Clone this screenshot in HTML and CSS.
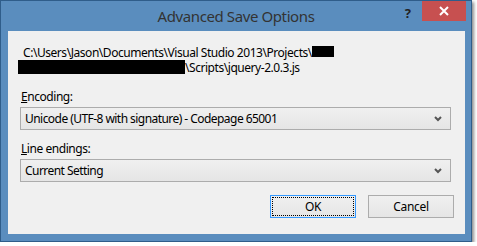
FILE: index.html
```html
<!DOCTYPE html>
<html lang="en">
<head>
    <meta charset="UTF-8">
    <title>Advanced Save Options</title>
    <link rel="stylesheet" href="styles.css">
</head>
<body>
    <div class="window">
        <div class="titlebar">
            <span class="title">Advanced Save Options</span>
            <span class="help">?</span>
            <span class="close">
                <svg width="10" height="10" viewBox="0 0 10 10">
                    <path d="M1 1 L9 9 M9 1 L1 9" stroke="#fff" stroke-width="2"/>
                </svg>
            </span>
        </div>

        <div class="client">
            <div class="path">
                <div class="path-line">C:\Users\Jason\Documents\Visual Studio 2013\Projects\<span class="redact short"></span></div>
                <div class="path-line second"><span class="redact long"></span>\Scripts\jquery-2.0.3.js</div>
            </div>

            <div class="field">
                <div class="label"><u>E</u>ncoding:</div>
                <div class="combo">
                    <span>Unicode (UTF-8 with signature) - Codepage 65001</span>
                    <svg class="chevron" width="8" height="6" viewBox="0 0 8 6">
                        <path d="M1 1 L4 4 L7 1" fill="none" stroke="#555" stroke-width="2"/>
                    </svg>
                </div>
            </div>

            <div class="field">
                <div class="label"><u>L</u>ine endings:</div>
                <div class="combo">
                    <span>Current Setting</span>
                    <svg class="chevron" width="8" height="6" viewBox="0 0 8 6">
                        <path d="M1 1 L4 4 L7 1" fill="none" stroke="#555" stroke-width="2"/>
                    </svg>
                </div>
            </div>

            <div class="buttons">
                <button class="btn default"><span class="focus">OK</span></button>
                <button class="btn">Cancel</button>
            </div>
        </div>
    </div>
</body>
</html>
```

FILE: styles.css
```css
/* Window frame */
html, body {
    margin: 0;
    padding: 0;
    background: #fff;
    font-family: 'Noto Sans', 'Open Sans', sans-serif;
}

* {
    box-sizing: border-box;
}

.window {
    width: 472px;
    height: 242px;
    background-color: #5a8dbe;
    border: 1px solid #2f5d8a;
    box-shadow: 2px 2px 3px rgba(0, 0, 0, 0.45);
    display: flex;
    flex-direction: column;
}

.titlebar {
    height: 30px;
    display: flex;
    align-items: flex-start;
    position: relative;
}

.title {
    position: absolute;
    left: 0;
    right: 0;
    top: 5px;
    text-align: center;
    font-size: 15px;
    letter-spacing: -0.4px;
    color: #333;
}

.help {
    margin-left: auto;
    margin-top: 3px;
    margin-right: 11px;
    font-size: 13px;
    font-weight: bold;
    color: #222;
    position: relative;
}

.close {
    width: 44px;
    height: 20px;
    background-color: #c75050;
    margin-right: 5px;
    display: flex;
    align-items: center;
    justify-content: center;
    position: relative;
}

/* Client area */
.client {
    flex: 1;
    margin: 0 6px 7px 7px;
    background-color: #f0f0f0;
    padding: 14px 14px 0 12px;
    font-size: 12px;
    letter-spacing: -0.45px;
    color: #000;
}

.path {
    padding-left: 3px;
    line-height: 15px;
}

.path-line.second {
    margin-left: -5px;
}

.redact {
    display: inline-block;
    background: #000;
    vertical-align: top;
}

.redact.short {
    width: 22px;
    height: 11px;
    margin-top: 1px;
}

.redact.long {
    width: 167px;
    height: 14px;
}

.field {
    margin-top: 14px;
}

.field + .field {
    margin-top: 11px;
}

.label {
    padding-left: 1px;
    line-height: 15px;
    margin-bottom: 3px;
}

.combo {
    height: 23px;
    border: 1px solid #acacac;
    background: linear-gradient(#f0f0f0, #e5e5e5);
    display: flex;
    align-items: center;
    padding: 0 8px 0 4px;
}

.combo span {
    letter-spacing: -0.55px;
}

.combo .chevron {
    margin-left: auto;
}

.buttons {
    display: flex;
    justify-content: flex-end;
    gap: 12px;
    margin-top: 13px;
    margin-right: -3px;
}

.btn {
    width: 86px;
    height: 23px;
    border: 1px solid #acacac;
    background: linear-gradient(#f0f0f0, #e5e5e5);
    font-family: inherit;
    font-size: 12px;
    letter-spacing: -0.3px;
    color: #000;
    padding: 0;
}

.btn.default {
    border-color: #3399ff;
    padding: 1px;
    display: flex;
}

.btn .focus {
    flex: 1;
    display: flex;
    align-items: center;
    justify-content: center;
    border: 1px dotted #000;
}
```
